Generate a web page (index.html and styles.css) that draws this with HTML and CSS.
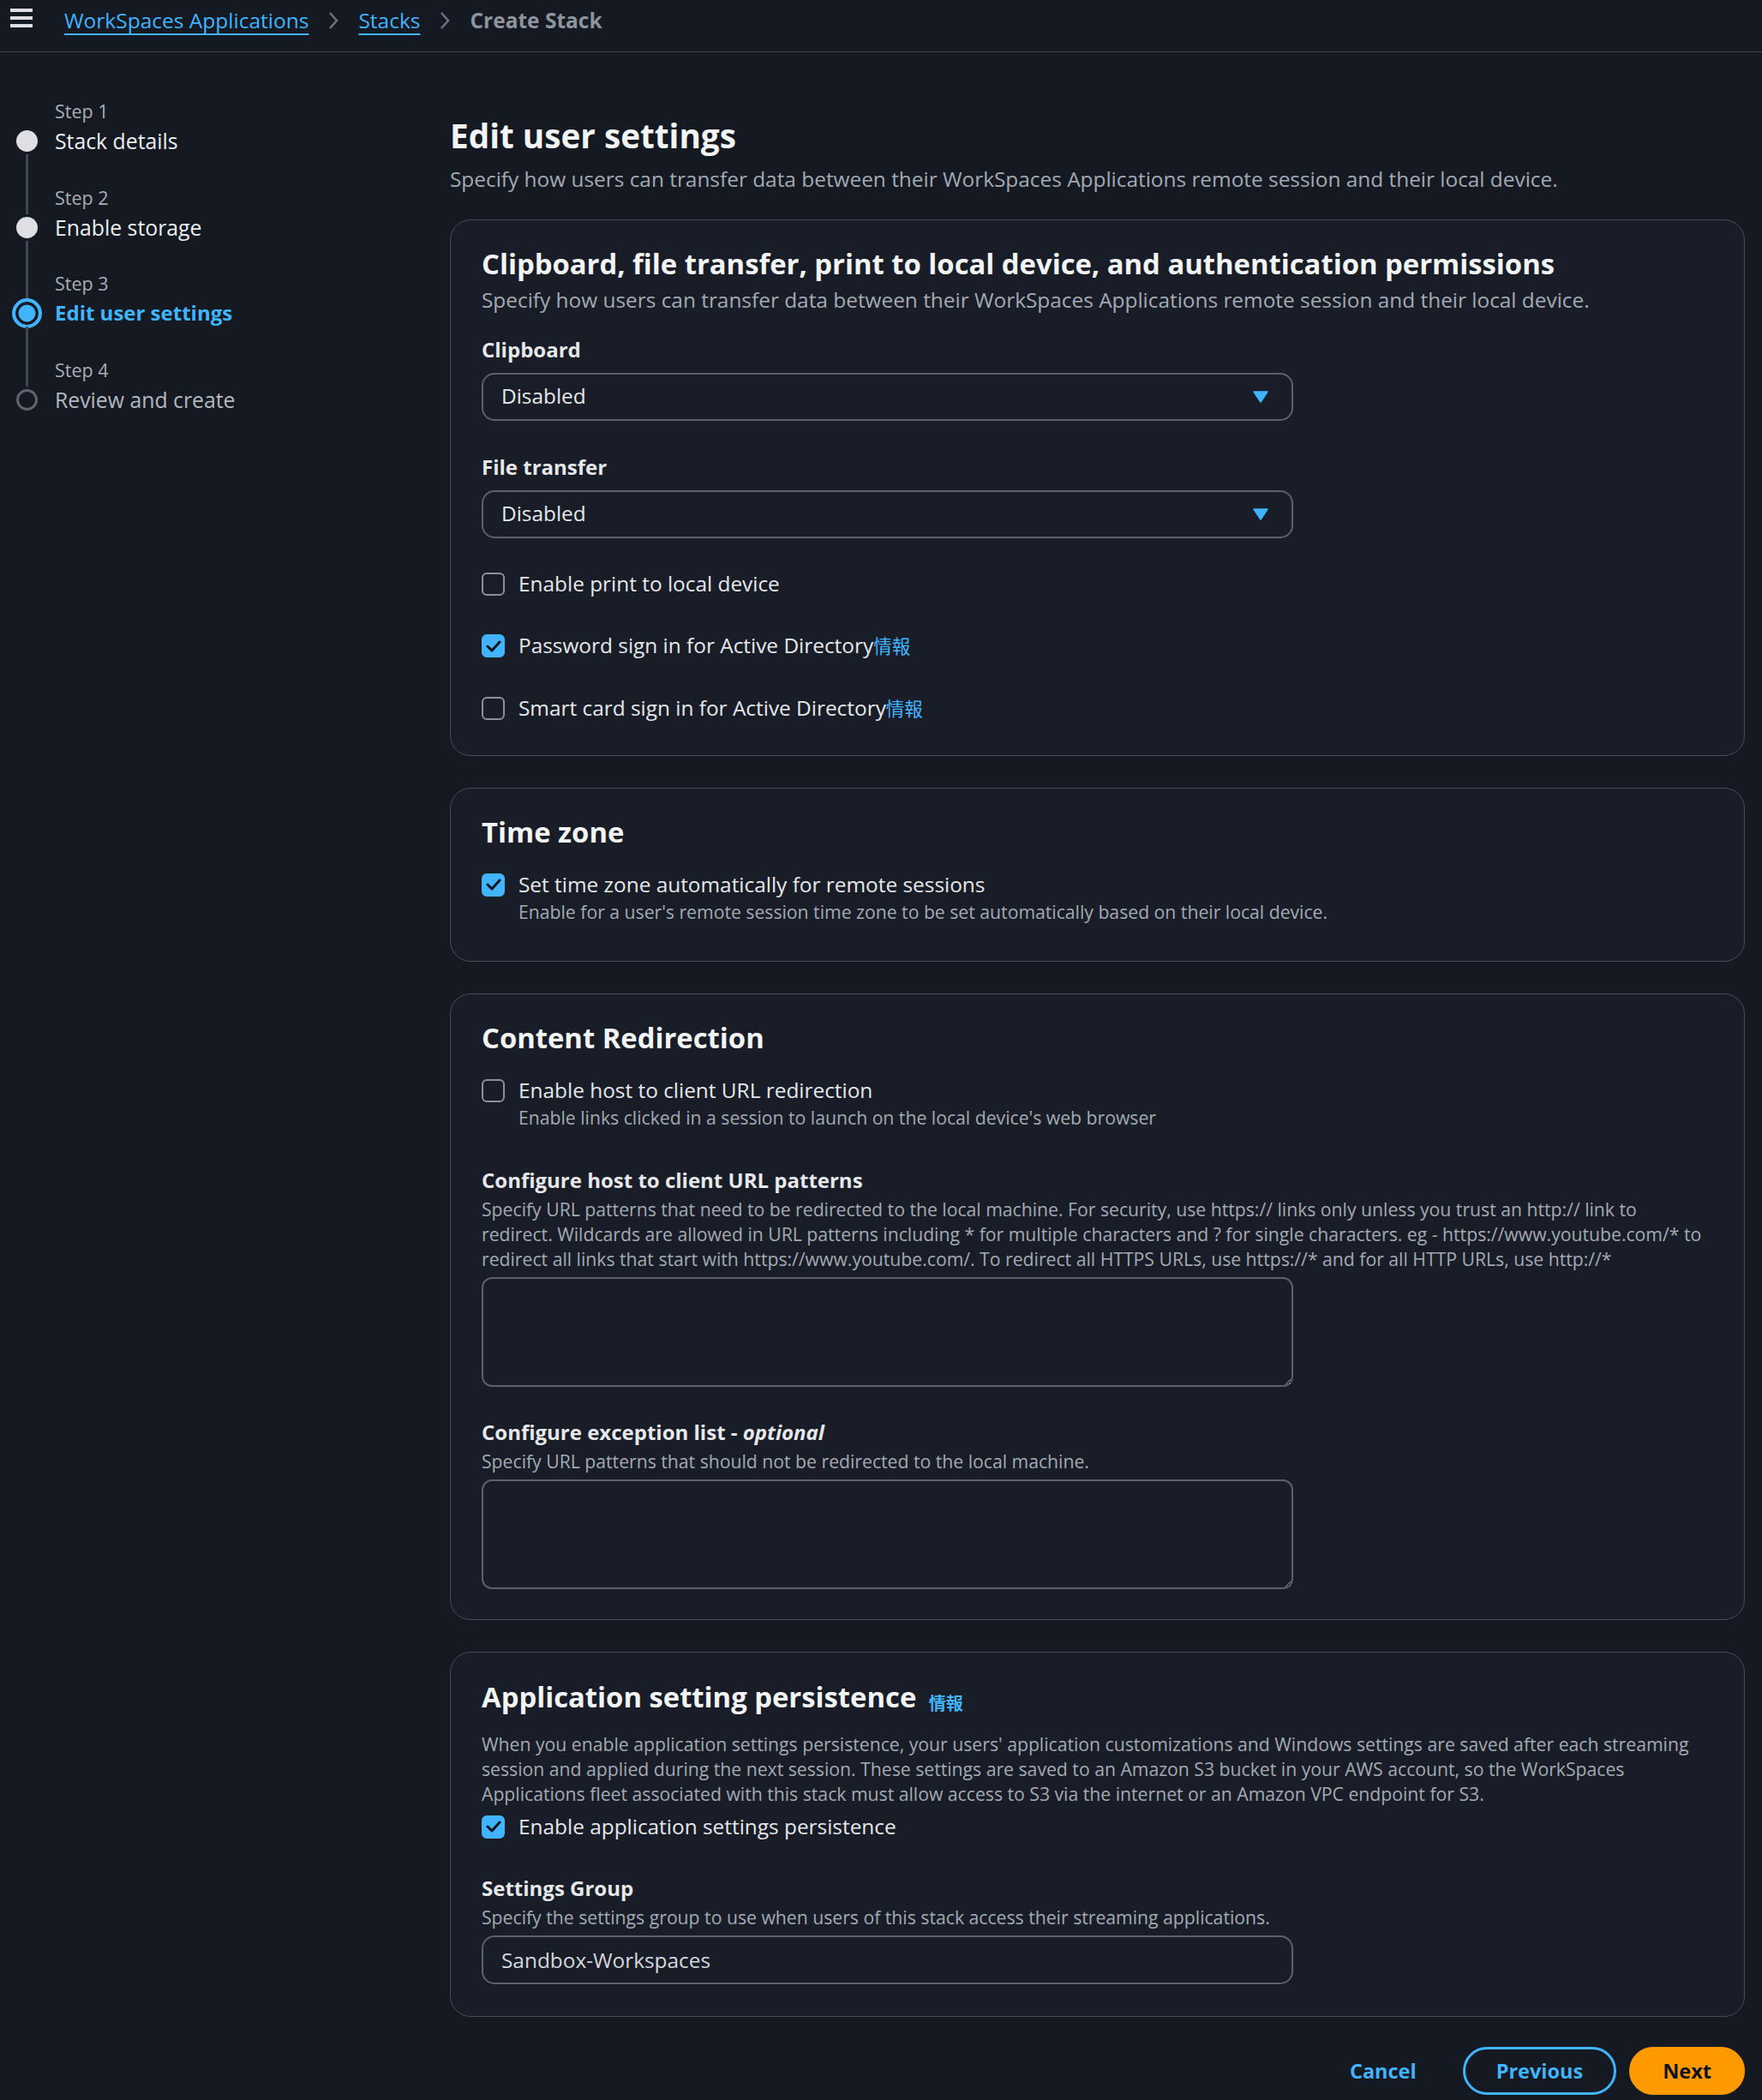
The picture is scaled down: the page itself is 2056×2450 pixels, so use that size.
FILE: index.html
```html
<!DOCTYPE html>
<html>
<head>
    <title>Create Stack</title>
    <link rel="stylesheet" href="styles.css">
</head>
<body>
    <header class="topbar">
        <div class="menu-btn"><span></span><span></span><span></span></div>
        <ol class="crumbs">
            <li><a href="#">WorkSpaces Applications</a></li>
            <li class="sep"><svg width="12" height="22" viewBox="0 0 12 22"><path d="M2 2 L10 11 L2 20" fill="none" stroke="#6b7380" stroke-width="2.5"/></svg></li>
            <li><a href="#">Stacks</a></li>
            <li class="sep"><svg width="12" height="22" viewBox="0 0 12 22"><path d="M2 2 L10 11 L2 20" fill="none" stroke="#6b7380" stroke-width="2.5"/></svg></li>
            <li class="current">Create Stack</li>
        </ol>
    </header>

    <div class="layout">
        <nav>
            <ol class="steps">
                <li class="step done first">
                    <div class="rail"><span class="seg top"></span><span class="dot-box"><span class="dot"></span></span><span class="seg bottom"></span></div>
                    <div class="step-text"><div class="step-no">Step 1</div><div class="step-title">Stack details</div></div>
                </li>
                <li class="step done">
                    <div class="rail"><span class="seg top"></span><span class="dot-box"><span class="dot"></span></span><span class="seg bottom"></span></div>
                    <div class="step-text"><div class="step-no">Step 2</div><div class="step-title">Enable storage</div></div>
                </li>
                <li class="step active">
                    <div class="rail"><span class="seg top"></span><span class="dot-box"><span class="dot"></span></span><span class="seg bottom"></span></div>
                    <div class="step-text"><div class="step-no">Step 3</div><div class="step-title">Edit user settings</div></div>
                </li>
                <li class="step todo last">
                    <div class="rail"><span class="seg top"></span><span class="dot-box"><span class="dot"></span></span><span class="seg bottom"></span></div>
                    <div class="step-text"><div class="step-no">Step 4</div><div class="step-title">Review and create</div></div>
                </li>
            </ol>
        </nav>

        <main class="main">
            <h1>Edit user settings</h1>
            <p class="page-desc">Specify how users can transfer data between their WorkSpaces Applications remote session and their local device.</p>

            <section class="card card-perm">
                <h2>Clipboard, file transfer, print to local device, and authentication permissions</h2>
                <p class="card-desc">Specify how users can transfer data between their WorkSpaces Applications remote session and their local device.</p>

                <div class="field first-field">
                    <label>Clipboard</label>
                    <div class="select"><span>Disabled</span><svg width="18" height="14" viewBox="0 0 18 14"><path d="M1 1 H17 L9 13 Z" fill="#42b4ff" stroke="#42b4ff" stroke-width="1.5" stroke-linejoin="round"/></svg></div>
                </div>
                <div class="field">
                    <label>File transfer</label>
                    <div class="select"><span>Disabled</span><svg width="18" height="14" viewBox="0 0 18 14"><path d="M1 1 H17 L9 13 Z" fill="#42b4ff" stroke="#42b4ff" stroke-width="1.5" stroke-linejoin="round"/></svg></div>
                </div>

                <div class="checks">
                    <div class="check"><span class="box"></span><span>Enable print to local device</span></div>
                    <div class="check"><span class="box on"><svg width="18" height="14" viewBox="0 0 18 14"><path d="M2 7 L7 12 L16 2" fill="none" stroke="#0f141a" stroke-width="3" stroke-linecap="round" stroke-linejoin="round"/></svg></span><span>Password sign in for Active Directory<a class="info" href="#">情報</a></span></div>
                    <div class="check"><span class="box"></span><span>Smart card sign in for Active Directory<a class="info" href="#">情報</a></span></div>
                </div>
            </section>

            <section class="card card-time">
                <h2>Time zone</h2>
                <div class="check with-desc"><span class="box on"><svg width="18" height="14" viewBox="0 0 18 14"><path d="M2 7 L7 12 L16 2" fill="none" stroke="#0f141a" stroke-width="3" stroke-linecap="round" stroke-linejoin="round"/></svg></span><span>Set time zone automatically for remote sessions</span></div>
                <p class="check-desc">Enable for a user's remote session time zone to be set automatically based on their local device.</p>
            </section>

            <section class="card card-redirect">
                <h2>Content Redirection</h2>
                <div class="check with-desc"><span class="box"></span><span>Enable host to client URL redirection</span></div>
                <p class="check-desc">Enable links clicked in a session to launch on the local device's web browser</p>

                <div class="field url-field">
                    <label>Configure host to client URL patterns</label>
                    <p class="field-desc">Specify URL patterns that need to be redirected to the local machine. For security, use https:// links only unless you trust an http:// link to redirect. Wildcards are allowed in URL patterns including * for multiple characters and ? for single characters. eg - https://www.youtube.com/* to redirect all links that start with https://www.youtube.com/. To redirect all HTTPS URLs, use https://* and for all HTTP URLs, use http://*</p>
                    <textarea></textarea>
                </div>
                <div class="field exc-field">
                    <label>Configure exception list - <i>optional</i></label>
                    <p class="field-desc">Specify URL patterns that should not be redirected to the local machine.</p>
                    <textarea></textarea>
                </div>
            </section>

            <section class="card card-persist">
                <h2>Application setting persistence <a class="info small" href="#">情報</a></h2>
                <p class="persist-desc">When you enable application settings persistence, your users' application customizations and Windows settings are saved after each streaming session and applied during the next session. These settings are saved to an Amazon S3 bucket in your AWS account, so the WorkSpaces Applications fleet associated with this stack must allow access to S3 via the internet or an Amazon VPC endpoint for S3.</p>
                <div class="check persist-check"><span class="box on"><svg width="18" height="14" viewBox="0 0 18 14"><path d="M2 7 L7 12 L16 2" fill="none" stroke="#0f141a" stroke-width="3" stroke-linecap="round" stroke-linejoin="round"/></svg></span><span>Enable application settings persistence</span></div>
                <div class="field group-field">
                    <label>Settings Group</label>
                    <p class="field-desc">Specify the settings group to use when users of this stack access their streaming applications.</p>
                    <div class="input">Sandbox-Workspaces</div>
                </div>
            </section>

            <div class="actions">
                <button class="btn link">Cancel</button>
                <button class="btn outline">Previous</button>
                <button class="btn primary">Next</button>
            </div>
        </main>
    </div>
</body>
</html>
```

FILE: styles.css
```css
* {
    box-sizing: border-box;
}

body {
    margin: 0;
    background: #141922;
    color: #e6e8eb;
    font-family: "Open Sans", "Noto Sans CJK JP", sans-serif;
    font-size: 24.4px;
    line-height: 30px;
}

a {
    color: #42b4ff;
    text-decoration: none;
}

/* top bar */
.topbar {
    height: 61px;
    border-bottom: 1px solid #3a414d;
    display: flex;
    align-items: flex-start;
}

.menu-btn {
    width: 26px;
    margin: 10px 0 0 12px;
    display: flex;
    flex-direction: column;
    gap: 5px;
}

.menu-btn span {
    height: 4px;
    background: #dedee3;
}

.crumbs {
    list-style: none;
    margin: 8px 0 0 37px;
    padding: 0;
    display: flex;
    align-items: center;
    gap: 23px;
    font-size: 24.5px;
    line-height: 32px;
}

.crumbs a {
    text-decoration: underline;
    text-underline-offset: 6px;
    text-decoration-thickness: 2px;
}

.crumbs .sep {
    display: flex;
    align-items: center;
}

.crumbs .current {
    color: #8d949e;
    font-weight: 700;
}

/* layout */
.layout {
    display: grid;
    grid-template-columns: 525px 1fr;
}

/* steps */
.steps {
    list-style: none;
    margin: 0;
    padding: 54px 0 0 0;
}

.step {
    display: flex;
}

.rail {
    width: 62px;
    margin-right: 2px;
    display: flex;
    flex-direction: column;
    align-items: center;
}

.seg {
    width: 3px;
    background: #414855;
}

.seg.top {
    height: 34px;
}

.seg.bottom {
    flex: 1;
}

.first .seg.top,
.last .seg.bottom {
    visibility: hidden;
}

.dot-box {
    height: 31px;
    display: flex;
    align-items: center;
    justify-content: center;
}

.dot {
    width: 25px;
    height: 25px;
    border-radius: 50%;
    flex-shrink: 0;
}

.done .dot {
    background: #dedee3;
}

.active .dot {
    width: 35px;
    height: 35px;
    border: 4px solid #42b4ff;
    background: #42b4ff;
    box-shadow: inset 0 0 0 3.5px #141922;
}

.todo .dot {
    border: 3px solid #5f6570;
}

.step-text {
    padding-bottom: 33.5px;
}

.step-no {
    color: #a9aeb6;
    font-size: 21.5px;
    line-height: 30px;
    margin-bottom: 1px;
}

.step-title {
    font-size: 24.8px;
    line-height: 36px;
    color: #eceef1;
}

.active .step-title {
    color: #42b4ff;
    font-weight: 700;
    font-size: 24px;
}

.todo .step-title {
    color: #b4b8bf;
}

/* main */
.main {
    padding: 73px 20px 0 0;
}

h1 {
    margin: 0;
    font-size: 38.7px;
    line-height: 48px;
    font-weight: 700;
    color: #f3f4f6;
}

.page-desc {
    margin: 12px 0 32px;
    color: #a4aab3;
}

.card {
    border: 1px solid #464d5a;
    border-radius: 24px;
    background: #181d27;
    padding: 31px 36px 39px;
    margin-bottom: 37px;
}

.card h2 {
    margin: 0;
    font-size: 32.8px;
    line-height: 40px;
    font-weight: 700;
    color: #f3f4f6;
}

.card p {
    margin: 0;
}

.card-desc {
    margin-top: 7px !important;
    color: #a4aab3;
}

.field label {
    display: block;
    font-weight: 700;
    font-size: 24px;
    line-height: 30px;
}

.field {
    margin-top: 39px;
}

.field.first-field {
    margin-top: 28px;
}

.select {
    margin-top: 12px;
    height: 56px;
    width: 947px;
    border: 2px solid #5a616d;
    border-radius: 15px;
    display: flex;
    align-items: center;
    justify-content: space-between;
    padding: 0 27px 2px 21px;
}

.select svg {
    margin-top: 2px;
}

.checks {
    margin-top: 38px;
    display: flex;
    flex-direction: column;
    gap: 42px;
}

.check {
    display: flex;
    align-items: center;
    gap: 16px;
    line-height: 30px;
}

.box {
    width: 27px;
    height: 27px;
    border: 2px solid #8b919b;
    border-radius: 6px;
    display: flex;
    align-items: center;
    justify-content: center;
    flex-shrink: 0;
}

.box.on {
    background: #42b4ff;
    border-color: #42b4ff;
}

.info {
    font-size: 21.5px;
}

.info.small {
    font-size: 20px;
    line-height: 1;
    margin-left: 6px;
    vertical-align: -3px;
}

.card-time .check,
.card-redirect .check {
    margin-top: 26px;
}

.check-desc {
    margin: 3px 0 0 43px !important;
    font-size: 21.2px;
    line-height: 28px;
    color: #a4aab3;
}

.card-time {
    padding-bottom: 43px;
}

.field-desc {
    margin-top: 4px !important;
    font-size: 21.2px;
    line-height: 29px;
    color: #a4aab3;
}

.url-field {
    margin-top: 44px;
}

.url-field .field-desc {
    max-width: 1428px;
}

.exc-field {
    margin-top: 38px;
}

.exc-field i {
    font-weight: 700;
}

textarea {
    display: block;
    margin-top: 7px;
    width: 947px;
    height: 128px;
    background: #181d27;
    border: 2px solid #5a616d;
    border-radius: 12px;
    color: #e6e8eb;
    font: inherit;
}

.card-redirect {
    padding-bottom: 35px;
}

.card-persist {
    padding-top: 32px;
    padding-bottom: 37px;
}

.persist-desc {
    margin-top: 20px !important;
    font-size: 21.2px;
    line-height: 29px;
    color: #a4aab3;
}

.persist-check {
    margin-top: 9px;
}

.group-field {
    margin-top: 42px;
}

.input {
    margin-top: 7px;
    height: 57px;
    width: 947px;
    border: 2px solid #5a616d;
    border-radius: 15px;
    display: flex;
    align-items: center;
    padding-left: 21px;
    color: #d5d8dd;
}

/* buttons */
.actions {
    display: flex;
    justify-content: flex-end;
    gap: 15px;
    margin-top: -2px;
}

.btn {
    height: 56px;
    padding: 0 36px;
    border-radius: 28px;
    border: 3px solid transparent;
    background: none;
    font-family: inherit;
    font-size: 23.5px;
    font-weight: 700;
    cursor: pointer;
}

.btn.link {
    color: #42b4ff;
}

.btn.outline {
    color: #42b4ff;
    border-color: #42b4ff;
}

.btn.primary {
    background: #ff9900;
    border-color: #ff9900;
    color: #0f141a;
}
```
